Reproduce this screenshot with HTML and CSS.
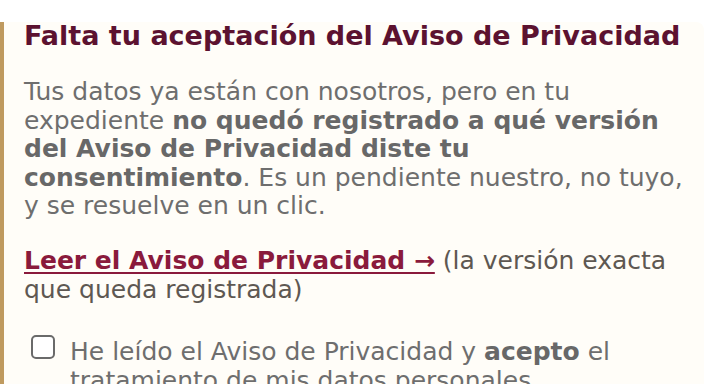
FILE: index.html
```html
<!DOCTYPE html>
<html lang="es">
<head>
  <meta charset="UTF-8" />
  <title>Aviso de Privacidad pendiente</title>
  <meta name="viewport" content="width=device-width, initial-scale=1.0"/>
  <link rel="stylesheet" href="styles.css">
</head>
<body>

  <div class="notice">
    <h2 class="notice-title">Falta tu aceptación del Aviso de Privacidad</h2>
    <p class="notice-text">
      Tus datos ya están con nosotros, pero en tu expediente
      <strong>no quedó registrado a qué versión del Aviso de Privacidad diste tu consentimiento</strong>.
      Es un pendiente nuestro, no tuyo, y se resuelve en un clic.
    </p>
    <p class="notice-link">
      <a href="#" class="privacy-link">Leer el Aviso de Privacidad →</a>
      (la versión exacta que queda registrada)
    </p>
    <label class="accept">
      <input type="checkbox" class="accept-box">
      <span>He leído el Aviso de Privacidad y <strong>acepto</strong> el tratamiento de mis datos personales</span>
    </label>
  </div>

</body>
</html>
```

FILE: styles.css
```css
body {
  margin: 0;
  padding-top: 22px;
  background: #ffffff;
  font-family: 'DejaVu Sans', sans-serif;
}

.notice {
  margin-right: 16px;
  padding: 0 16px 40px 20px;
  background: #fffdf8;
  border-left: 4px solid #bf9a5f;
  border-radius: 0 8px 8px 0;
}

.notice-title {
  margin: 0 0 28px;
  font-size: 27px;
  line-height: 28px;
  color: #5c1230;
}

.notice-text {
  margin: 0 0 26.5px;
  font-size: 25px;
  line-height: 28.5px;
  color: #6e6e6e;
}

.notice-text strong {
  color: #686868;
}

.notice-link {
  margin: 0 0 34px;
  font-size: 25px;
  line-height: 28.5px;
  color: #5e5852;
}

.privacy-link {
  color: #8a1a3c;
  font-weight: bold;
  text-decoration: underline;
  text-decoration-thickness: 2px;
  text-underline-offset: 3px;
}

.accept {
  display: flex;
  align-items: flex-start;
  gap: 15px;
  padding-left: 7px;
  font-size: 25px;
  line-height: 28.5px;
  color: #6e6e6e;
  cursor: pointer;
}

.accept-box {
  appearance: none;
  flex: none;
  width: 24px;
  height: 24px;
  margin: -3px 0 0;
  border: 2px solid #6a6a6a;
  border-radius: 5px;
  background: #ffffff;
}

.accept strong {
  color: #686868;
}
```
